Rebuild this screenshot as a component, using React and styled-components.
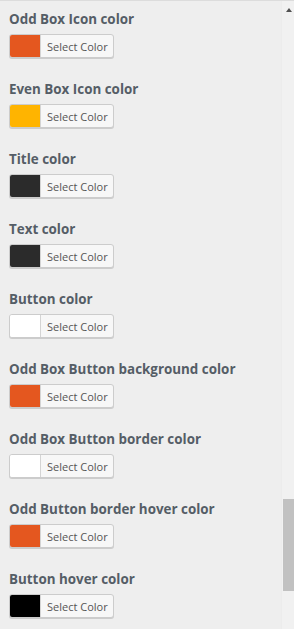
import React from "react";
import styled, { createGlobalStyle } from "styled-components";

const Global = createGlobalStyle`
  html, body { margin: 0; padding: 0; background: #eeeeee; }
  body { font-family: "Open Sans", "Noto Sans", sans-serif; }
  #root { height: 629px; }
`;

const Frame = styled.div`
  display: flex;
  width: 294px;
  height: 629px;
  overflow: hidden;
  background: #eeeeee;
  border-top: 1px solid #dcdcdc;
  box-sizing: border-box;
`;

const Panel = styled.div`
  flex: 1;
  padding: 8px 0 0 9px;
  display: flex;
  flex-direction: column;
  gap: 21px;
`;

const Section = styled.div`
  display: flex;
  flex-direction: column;
  align-items: flex-start;
  gap: 5px;
`;

const Title = styled.div`
  font-size: 13.4px;
  line-height: 20px;
  font-weight: 700;
  color: #555d66;
  white-space: nowrap;
`;

const ColorButton = styled.button`
  display: inline-flex;
  align-items: stretch;
  height: 24px;
  padding: 0;
  margin: 0;
  border: 1px solid #cccccc;
  border-radius: 3px;
  box-shadow: 0 1px 0 #cccccc;
  background: #f7f7f7;
  overflow: hidden;
  box-sizing: border-box;
  cursor: pointer;
  font-family: inherit;
`;

const Swatch = styled.span`
  width: 30px;
  background: ${(p) => p.$color};
  border-right: 1px solid #d4d4d4;
`;

const Label = styled.span`
  display: flex;
  align-items: center;
  padding: 0 5px 0 6px;
  font-size: 11px;
  color: #555555;
  white-space: nowrap;
`;

const Scrollbar = styled.div`
  width: 13px;
  flex: none;
  display: flex;
  flex-direction: column;
  align-items: flex-end;
  background: #f1f1f1;
  border-left: 1px solid #ececec;
  box-sizing: border-box;
`;

const ArrowUp = styled.div`
  align-self: center;
  margin: 7px 0 0 1px;
  width: 0;
  height: 0;
  border-left: 3.5px solid transparent;
  border-right: 3.5px solid transparent;
  border-bottom: 4px solid #505050;
`;

const Thumb = styled.div`
  margin-top: 487px;
  width: 11px;
  height: 92px;
  background: #c1c1c1;
`;

const items = [
  { title: "Odd Box Icon color", color: "#e4571f" },
  { title: "Even Box Icon color", color: "#ffb400" },
  { title: "Title color", color: "#2b2b2b" },
  { title: "Text color", color: "#2b2b2b" },
  { title: "Button color", color: "#ffffff" },
  { title: "Odd Box Button background color", color: "#e4571f" },
  { title: "Odd Box Button border color", color: "#ffffff" },
  { title: "Odd Button border hover color", color: "#e4571f" },
  { title: "Button hover color", color: "#000000" },
];

export default function App() {
  return (
    <>
      <Global />
      <Frame>
        <Panel>
          {items.map((it) => (
            <Section key={it.title}>
              <Title>{it.title}</Title>
              <ColorButton type="button">
                <Swatch $color={it.color} />
                <Label>Select Color</Label>
              </ColorButton>
            </Section>
          ))}
        </Panel>
        <Scrollbar>
          <ArrowUp />
          <Thumb />
        </Scrollbar>
      </Frame>
    </>
  );
}
